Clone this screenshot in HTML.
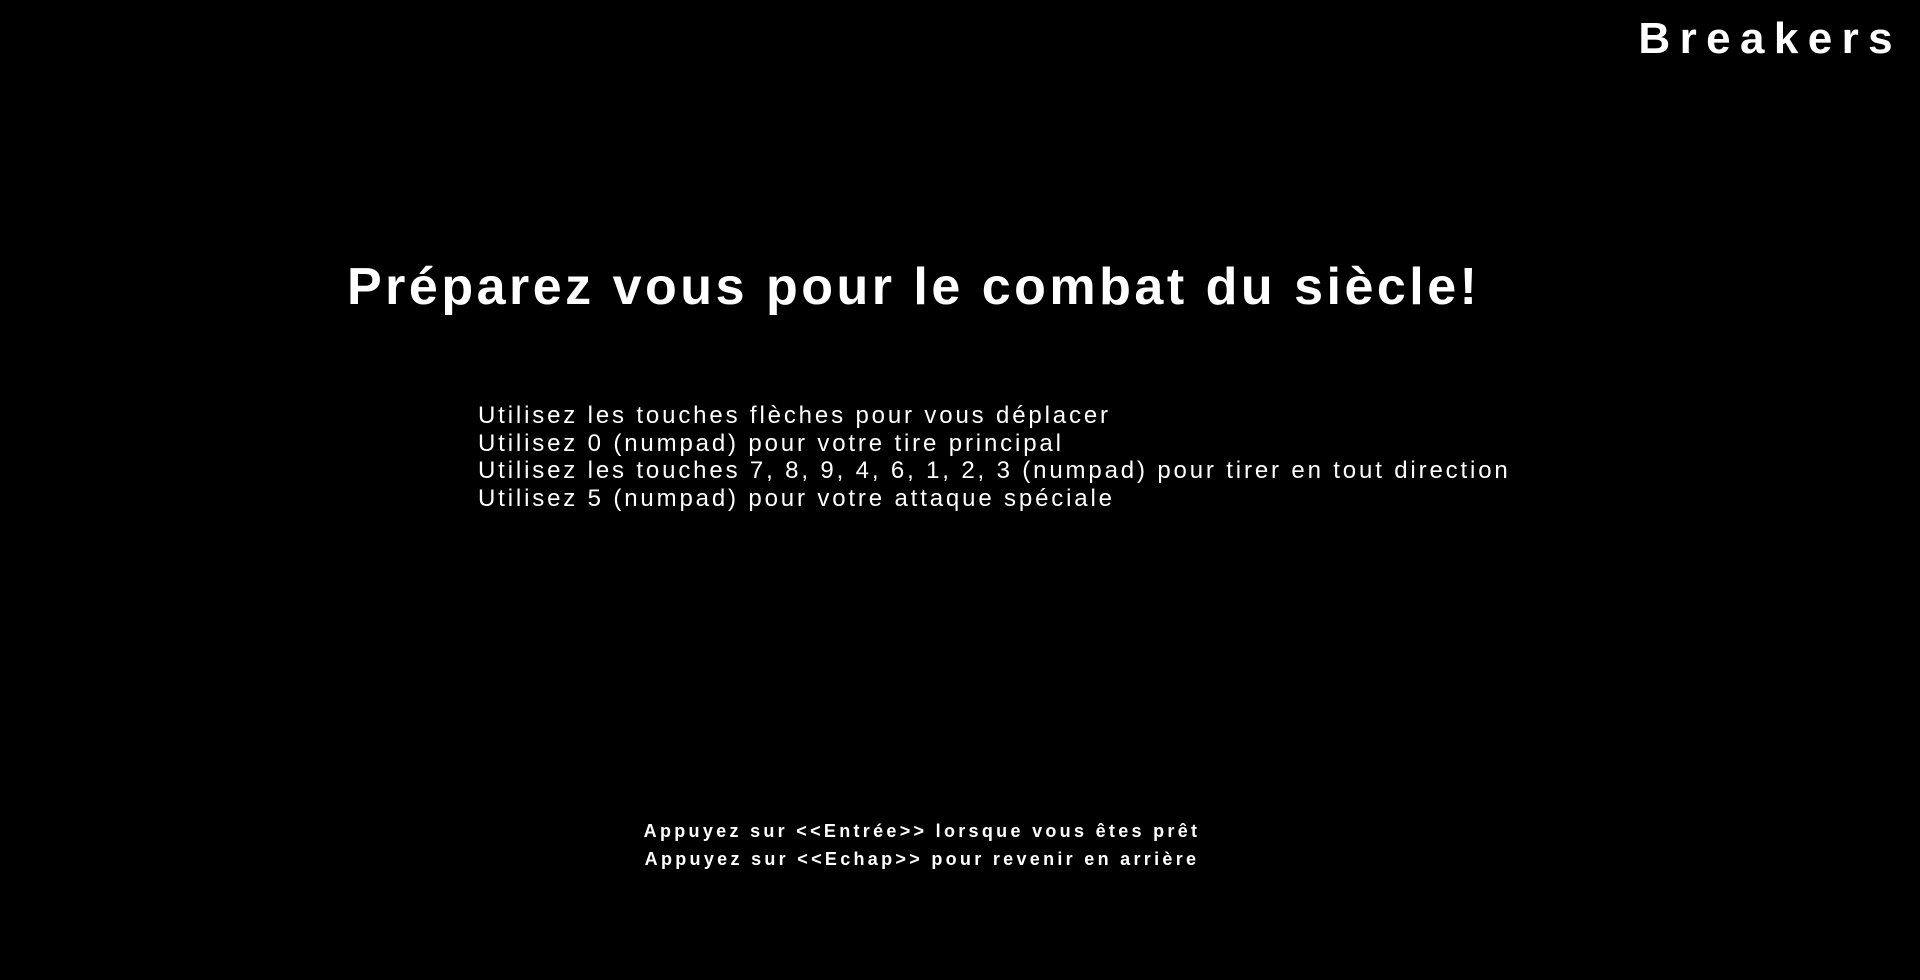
<!DOCTYPE html>
<html><head><meta charset="utf-8"><style>
html,body{margin:0;padding:0;background:#000;width:1920px;height:980px;overflow:hidden}
body{font-family:"Liberation Sans","DejaVu Sans",sans-serif;color:#fff;position:relative}
.a{position:absolute;white-space:nowrap;line-height:1}
#brand{right:18px;top:17px;font-size:44px;letter-spacing:9.4px;font-weight:bold}
#title{left:347px;top:261px;font-size:52px;letter-spacing:3.5px;font-weight:bold}
#ins{left:478px;top:402px;font-size:24px;line-height:27.5px;letter-spacing:2.85px}
#bot{left:0;width:1844px;text-align:center;top:817px;font-size:18px;line-height:28px;font-weight:bold;letter-spacing:3.3px}
</style></head><body>
<div class="a" id="brand">Breakers</div>
<div class="a" id="title">Préparez vous pour le combat du siècle!</div>
<div class="a" id="ins">Utilisez les touches flèches pour vous déplacer<br>Utilisez 0 (numpad) pour votre tire principal<br>Utilisez les touches 7, 8, 9, 4, 6, 1, 2, 3 (numpad) pour tirer en tout direction<br>Utilisez 5 (numpad) pour votre attaque spéciale</div>
<div class="a" id="bot">Appuyez sur &lt;&lt;Entrée&gt;&gt; lorsque vous êtes prêt<br>Appuyez sur &lt;&lt;Echap&gt;&gt; pour revenir en arrière</div>
</body></html>
